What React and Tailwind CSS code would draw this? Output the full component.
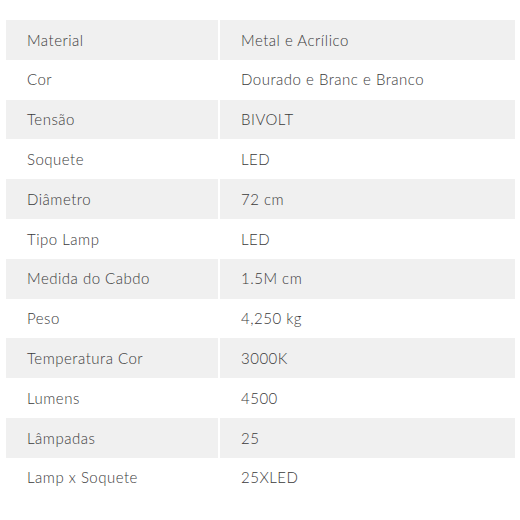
const rows = [
  ['Material', 'Metal e Acrílico'],
  ['Cor', 'Dourado e Branc e Branco'],
  ['Tensão', 'BIVOLT'],
  ['Soquete', 'LED'],
  ['Diâmetro', '72 cm'],
  ['Tipo Lamp', 'LED'],
  ['Medida do Cabdo', '1.5M cm'],
  ['Peso', '4,250 kg'],
  ['Temperatura Cor', '3000K'],
  ['Lumens', '4500'],
  ['Lâmpadas', '25'],
  ['Lamp x Soquete', '25XLED'],
]

export default function App() {
  return (
    <div className="w-[520px] h-[520px] bg-white pt-5 pl-[6px] font-['Lato',sans-serif] font-light text-[15px] tracking-[0.5px] text-[#3a3a3a]">
      <div className="flex flex-col w-[509px]">
        {rows.map(([label, value], i) => (
          <div key={label} className="flex gap-[2px] h-[39.8px]">
            <div className={`w-[212px] flex items-center pl-[21px] ${i % 2 === 0 ? 'bg-[#f0f0f0]' : ''}`}>
              {label}
            </div>
            <div className={`flex-1 flex items-center pl-[21px] ${i % 2 === 0 ? 'bg-[#f0f0f0]' : ''}`}>
              {value}
            </div>
          </div>
        ))}
      </div>
    </div>
  )
}
